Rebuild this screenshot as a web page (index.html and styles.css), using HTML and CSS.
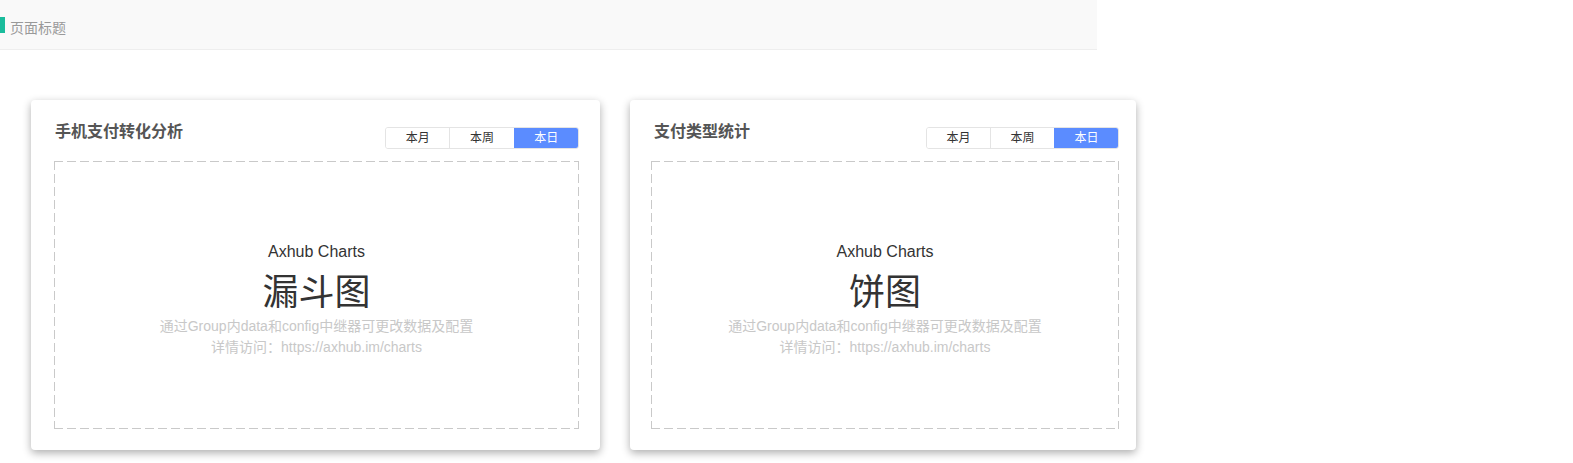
FILE: index.html
```html
<!DOCTYPE html>
<html lang="zh-CN">
<head>
<meta charset="utf-8">
<title>页面标题</title>
<link rel="stylesheet" href="styles.css">
</head>
<body>
<header class="page-header">
  <span class="page-header__bar"></span>
  <span class="page-header__title">页面标题</span>
</header>
<main class="board">
  <section class="card card--funnel">
    <div class="card__head">
      <h2 class="card__title">手机支付转化分析</h2>
      <div class="seg">
        <span class="seg__btn">本月</span>
        <span class="seg__btn">本周</span>
        <span class="seg__btn seg__btn--active">本日</span>
      </div>
    </div>
    <div class="chart">
      <div class="chart__brand">Axhub Charts</div>
      <div class="chart__name">漏斗图</div>
      <div class="chart__hint">通过Group内data和config中继器可更改数据及配置</div>
      <div class="chart__hint">详情访问：https://axhub.im/charts</div>
    </div>
  </section>
  <section class="card card--pie">
    <div class="card__head">
      <h2 class="card__title">支付类型统计</h2>
      <div class="seg">
        <span class="seg__btn">本月</span>
        <span class="seg__btn">本周</span>
        <span class="seg__btn seg__btn--active">本日</span>
      </div>
    </div>
    <div class="chart">
      <div class="chart__brand">Axhub Charts</div>
      <div class="chart__name">饼图</div>
      <div class="chart__hint">通过Group内data和config中继器可更改数据及配置</div>
      <div class="chart__hint">详情访问：https://axhub.im/charts</div>
    </div>
  </section>
</main>
</body>
</html>
```

FILE: styles.css
```css
* { box-sizing: border-box; }
html, body { margin: 0; padding: 0; background: #ffffff; }
body {
  font-family: "Liberation Sans", "Noto Sans CJK SC", Arial, sans-serif;
  color: #333;
  width: 1573px;
  height: 463px;
  overflow: hidden;
}

.page-header {
  width: 1097px;
  height: 50px;
  background: #f9f9f9;
  border-bottom: 1px solid #eeeeee;
  display: flex;
  align-items: flex-start;
  padding-top: 17px;
}
.page-header__bar {
  width: 5px;
  height: 16px;
  background: #1abc9c;
  flex: none;
}
.page-header__title {
  margin-left: 5px;
  margin-top: 1px;
  font-size: 14px;
  line-height: 20px;
  color: #999999;
}

.board {
  display: flex;
  align-items: flex-start;
  gap: 30px;
  padding: 50px 0 0 31px;
}

.card {
  height: 350px;
  background: #fff;
  border-radius: 4px;
  box-shadow: 0 3px 8px rgba(0, 0, 0, 0.32);
  display: flex;
  flex-direction: column;
}
.card--funnel { width: 569px; padding: 0 21px 21px 23px; }
.card--pie { width: 506px; padding: 0 17px 21px 21px; }
.card--funnel .card__title { margin-left: 1px; }
.card--pie .card__title { margin-left: 3px; }

.card__head {
  display: flex;
  justify-content: space-between;
  align-items: flex-start;
  padding-top: 22px;
  margin-bottom: 12px;
}
.card__title {
  margin: 0;
  font-size: 16px;
  line-height: 20px;
  font-weight: bold;
  color: #555555;
}

.seg {
  margin-top: 5px;
  display: flex;
  width: 194px;
  height: 22px;
  border: 1px solid #e4e4e4;
  border-radius: 3px;
  overflow: hidden;
}
.card--pie .seg { width: 193px; }
.seg__btn {
  flex: 1;
  font-size: 12px;
  line-height: 20px;
  text-align: center;
  color: #333;
  background: #fff;
}
.seg__btn + .seg__btn { border-left: 1px solid #e4e4e4; }
.seg__btn--active {
  background: #5b8cff;
  color: #fff;
  border-left-color: #5b8cff !important;
}

.chart {
  flex: 1;
  background-color: #fff;
  background-image:
    repeating-linear-gradient(90deg, #c9c9c9 0 9px, transparent 9px 13px),
    repeating-linear-gradient(90deg, #c9c9c9 0 9px, transparent 9px 13px),
    repeating-linear-gradient(180deg, #c9c9c9 0 9px, transparent 9px 13px),
    repeating-linear-gradient(180deg, #c9c9c9 0 9px, transparent 9px 13px);
  background-size: 100% 1px, 100% 1px, 1px 100%, 1px 100%;
  background-position: left top, left bottom, left top, right top;
  background-repeat: no-repeat;
  display: flex;
  flex-direction: column;
  align-items: center;
  justify-content: center;
  padding-top: 10px;
  text-align: center;
}
.chart__brand {
  font-size: 16px;
  line-height: 20px;
  color: #333;
}
.chart__name {
  margin-top: 10px;
  font-size: 36px;
  line-height: 42px;
  color: #333;
}
.chart__hint {
  font-size: 14px;
  line-height: 21px;
  color: #c8c8c8;
}
.chart__name + .chart__hint { margin-top: 2px; }
```
